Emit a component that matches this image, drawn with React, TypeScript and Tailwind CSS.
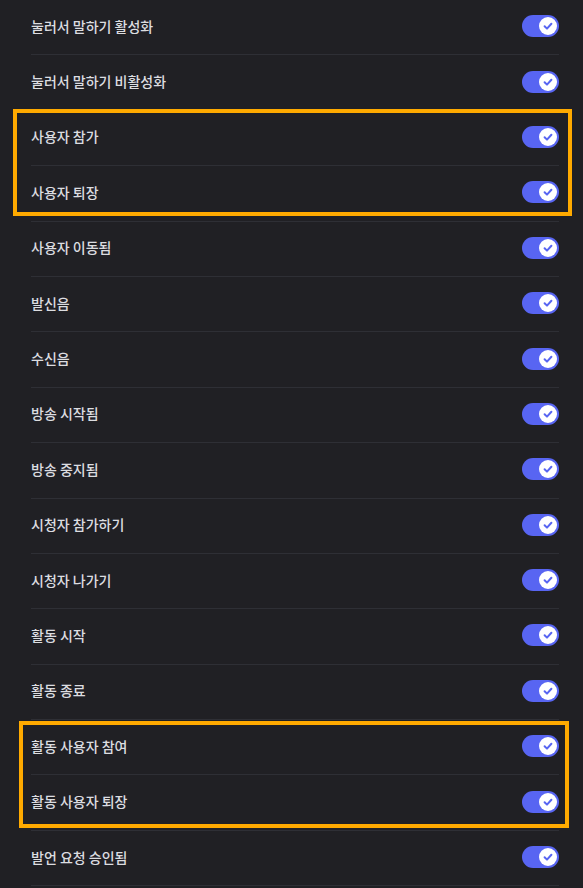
import React from 'react';

const LABELS = [
  '눌러서 말하기 활성화',
  '눌러서 말하기 비활성화',
  '사용자 참가',
  '사용자 퇴장',
  '사용자 이동됨',
  '발신음',
  '수신음',
  '방송 시작됨',
  '방송 중지됨',
  '시청자 참가하기',
  '시청자 나가기',
  '활동 시작',
  '활동 종료',
  '활동 사용자 참여',
  '활동 사용자 퇴장',
  '발언 요청 승인됨',
];

const Toggle: React.FC = () => (
  <div className="flex h-[22px] w-[37px] items-center justify-end rounded-full bg-[#5865f2] pr-[2px]">
    <div className="flex h-[18px] w-[18px] items-center justify-center rounded-full bg-white">
      <svg width="12" height="12" viewBox="0 0 12 12" fill="none">
        <path d="M2.6 6.3 L5 8.6 L9.4 3.8" stroke="#5865f2" strokeWidth="2" strokeLinecap="round" strokeLinejoin="round" />
      </svg>
    </div>
  </div>
);

const App: React.FC = () => {
  return (
    <div className="relative h-[888px] w-[583px] overflow-hidden bg-[#202024] pl-[31px] pr-[24px]" style={{ fontFamily: '"Noto Sans CJK KR", "Noto Sans", sans-serif' }}>
      {LABELS.map(label => (
        <div key={label} className="flex h-[55.4px] items-center justify-between border-b border-[#2e2f35] pb-[2px]">
          <span className="text-[14px] font-medium text-[#dcdde0]">{label}</span>
          <Toggle />
        </div>
      ))}

      {/* highlight boxes */}
      <div className="pointer-events-none absolute left-[13px] top-[109px] h-[107px] w-[559px] border-4 border-[#ffaa00]" />
      <div className="pointer-events-none absolute left-[19px] top-[721px] h-[107px] w-[550px] border-4 border-[#ffaa00]" />
    </div>
  );
};

export default App;
